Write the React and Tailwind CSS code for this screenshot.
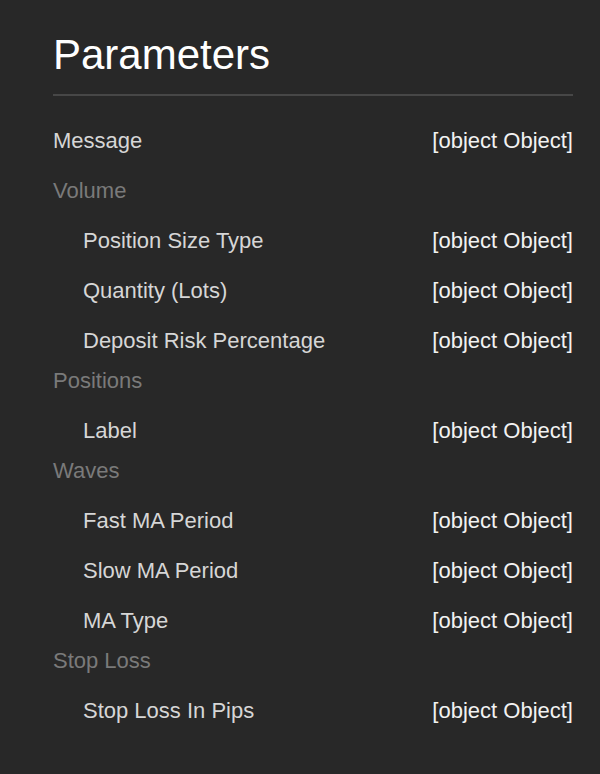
const groups = [
  { title: 'Volume', items: ['Position Size Type', 'Quantity (Lots)', 'Deposit Risk Percentage'] },
  { title: 'Positions', items: ['Label'] },
  { title: 'Waves', items: ['Fast MA Period', 'Slow MA Period', 'MA Type'] },
  { title: 'Stop Loss', items: ['Stop Loss In Pips'] },
];

const value = String({});

function Row({ label, indent }) {
  return (
    <div className={`flex h-[50px] items-center justify-between leading-[26px] ${indent ? 'pl-[30px]' : ''}`}>
      <span className="text-[#d6d6d6]">{label}</span>
      <span className="text-[#f2f2f2]">{value}</span>
    </div>
  );
}

export default function App() {
  return (
    <div
      className="min-h-[774px] bg-[#282828] pl-[53px] pr-[27px] pt-[30px] pb-10"
      style={{ fontFamily: '"Liberation Sans", Arial, sans-serif' }}
    >
      <h1 className="text-[42px] leading-[50px] text-white pb-[14px] border-b-2 border-[#474747]">
        Parameters
      </h1>

      <div className="mt-[20px] text-[22px]">
        <div className="mb-[10px]">
          <Row label="Message" />
        </div>
        {groups.map((g) => (
          <div key={g.title}>
            <div className="h-[40px] pt-[2px] leading-[26px] text-[#7a7a7a]">{g.title}</div>
            {g.items.map((item) => (
              <Row key={item} label={item} indent />
            ))}
          </div>
        ))}
      </div>
    </div>
  );
}
